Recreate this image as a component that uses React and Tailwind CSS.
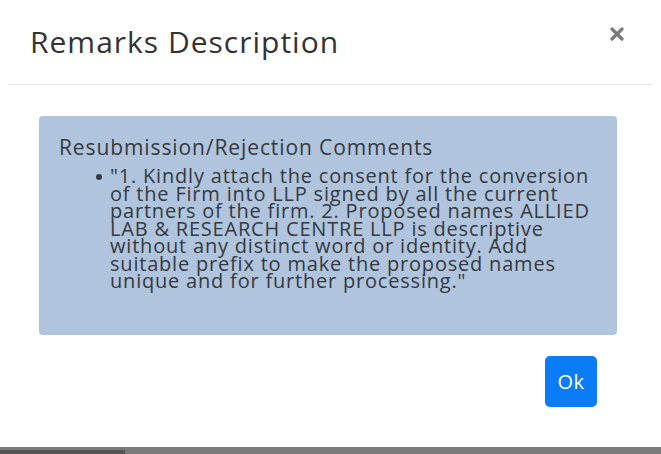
import React from 'react';

const App = () => {
    const lines = [
        '"1. Kindly attach the consent for the conversion',
        'of the Firm into LLP signed by all the current',
        'partners of the firm. 2. Proposed names ALLIED',
        'LAB & RESEARCH CENTRE LLP is descriptive',
        'without any distinct word or identity. Add',
        'suitable prefix to make the proposed names',
        'unique and for further processing."',
    ];

    return (
        <div className="h-[454px] w-[661px] bg-white flex flex-col overflow-hidden" style={{ fontFamily: '"Open Sans", sans-serif' }}>
            <div className="flex-grow flex flex-col">
                <div className="flex items-start justify-between pl-[30px] pr-[37px] pt-[22px] h-[84px]">
                    <h1 className="text-[30px] leading-[40px] tracking-[1px] text-[#333]">Remarks Description</h1>
                    <button className="mt-[5px] text-[#7a7a7a]">
                        <svg width="14" height="14" viewBox="0 0 14 14">
                            <path d="M2 2 L12 12 M12 2 L2 12" stroke="currentColor" strokeWidth="3.2" strokeLinecap="round" />
                        </svg>
                    </button>
                </div>
                <div className="mx-2 border-t border-[#e6e6e6]"></div>

                <div className="px-[39px] pt-[31px] pr-[44px]">
                    <div className="bg-[#b0c4de] rounded-[4px] h-[219px] pl-[20px] pt-[17px]">
                        <h2 className="text-[21px] leading-[28px] tracking-[0.9px] text-[#343a40]">Resubmission/Rejection Comments</h2>
                        <ul className="pl-[37px] mt-[6px] text-[20px] leading-[17.5px] tracking-[0.8px] text-[#343a40]">
                            <li className="flex">
                                <span className="w-[14px] shrink-0 pt-[7px]">
                                    <span className="block w-[6px] h-[6px] rounded-full bg-[#343a40]"></span>
                                </span>
                                <div>
                                    {lines.map((line, i) => (
                                        <div key={i} className="whitespace-nowrap">{line}</div>
                                    ))}
                                </div>
                            </li>
                        </ul>
                    </div>
                </div>

                <div className="flex justify-end pr-[64px] pt-[21px]">
                    <button className="w-[52px] h-[51px] bg-[#0a7cf6] rounded-[5px] text-white text-[20px] tracking-[0.5px]">Ok</button>
                </div>
            </div>
            <div className="h-[7px] bg-[#7b7b7b] flex">
                <div className="w-[125px] mt-[3px] bg-[#555]"></div>
            </div>
        </div>
    );
};

export default App;
